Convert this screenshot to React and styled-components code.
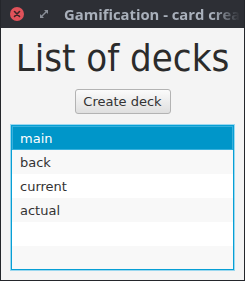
import React from "react";
import styled, { createGlobalStyle } from "styled-components";

const Global = createGlobalStyle`
  html, body { margin: 0; padding: 0; background: #2b2d33; }
  body { width: 245px; height: 281px; overflow: hidden; }
`;

const Window = styled.div`
  width: 245px;
  height: 281px;
  box-sizing: border-box;
  background: #2d2f35;
  border: 1px solid #24262b;
  border-top: none;
  display: flex;
  flex-direction: column;
  font-family: "DejaVu Sans", Verdana, sans-serif;
`;

const TitleBar = styled.div`
  height: 28px;
  flex: none;
  display: flex;
  align-items: center;
  padding-left: 9px;
  overflow: hidden;
`;

const CloseButton = styled.div`
  width: 14px;
  height: 14px;
  border-radius: 50%;
  background: #e0525a;
  display: flex;
  align-items: center;
  justify-content: center;
  flex: none;
`;

const MaxButton = styled.div`
  width: 10px;
  height: 10px;
  margin-left: 15px;
  flex: none;
  display: flex;
`;

const WindowTitle = styled.div`
  margin-left: 15px;
  color: #a9b0bb;
  font-family: "Open Sans", "DejaVu Sans", sans-serif;
  font-weight: 700;
  font-size: 14.8px;
  white-space: nowrap;
  -webkit-mask-image: linear-gradient(to right, #000 150px, transparent 176px);
  mask-image: linear-gradient(to right, #000 150px, transparent 176px);
`;

const Content = styled.div`
  flex: 1;
  min-height: 0;
  background: #f4f4f4;
  display: flex;
  flex-direction: column;
  align-items: center;
  padding: 8px 10px 10px 10px;
`;

const Heading = styled.h1`
  margin: 0;
  font-family: "DejaVu Sans Condensed", "DejaVu Sans", sans-serif;
  font-stretch: condensed;
  font-weight: normal;
  font-size: 38px;
  line-height: 44px;
  white-space: nowrap;
  color: #2b2b2b;
`;

const Button = styled.button`
  margin-top: 9px;
  width: 96px;
  height: 25px;
  flex: none;
  box-sizing: border-box;
  border: 1px solid #b3b3b3;
  border-radius: 3px;
  background: linear-gradient(#fbfbfb, #dfdfdf);
  font-family: "DejaVu Sans", sans-serif;
  font-size: 13px;
  color: #333;
  padding: 0;
`;

const List = styled.div`
  margin-top: 11px;
  align-self: stretch;
  flex: 1;
  min-height: 0;
  box-sizing: border-box;
  border: 1px solid #079fd5;
  box-shadow: 0 0 0 1px #9bd8ef;
  display: flex;
  flex-direction: column;
  background: #fff;
  overflow: hidden;
`;

const Row = styled.div`
  height: 24px;
  flex: none;
  box-sizing: border-box;
  display: flex;
  align-items: center;
  font-size: 13px;
  color: ${(p) => (p.$selected ? "#ffffff" : "#333333")};
  background: ${(p) =>
    p.$selected ? "#0096c9" : p.$odd ? "#f8f8f8" : "#ffffff"};
  border: ${(p) => (p.$selected ? "1px solid #38b0dc" : "none")};
  padding-left: ${(p) => (p.$selected ? "7px" : "8px")};
`;

const decks = ["main", "back", "current", "actual", "", ""];

export default function App() {
  return (
    <>
      <Global />
      <Window>
        <TitleBar>
          <CloseButton>
            <svg width="8" height="8" viewBox="0 0 8 8">
              <path d="M1.5 1.5 L6.5 6.5 M6.5 1.5 L1.5 6.5" stroke="#3a2426" strokeWidth="1.6" strokeLinecap="round" />
            </svg>
          </CloseButton>
          <MaxButton>
            <svg width="10" height="10" viewBox="0 0 10 10">
              <path d="M5 1 L9 1 L9 5 Z" fill="#8a8f98" />
              <path d="M1 5 L1 9 L5 9 Z" fill="#8a8f98" />
              <path d="M2 8 L8 2" stroke="#8a8f98" strokeWidth="1.4" />
            </svg>
          </MaxButton>
          <WindowTitle>Gamification - card creator</WindowTitle>
        </TitleBar>
        <Content>
          <Heading>List of decks</Heading>
          <Button>Create deck</Button>
          <List>
            {decks.map((d, i) => (
              <Row key={i} $selected={i === 0} $odd={i % 2 === 1}>
                {d}
              </Row>
            ))}
          </List>
        </Content>
      </Window>
    </>
  );
}
